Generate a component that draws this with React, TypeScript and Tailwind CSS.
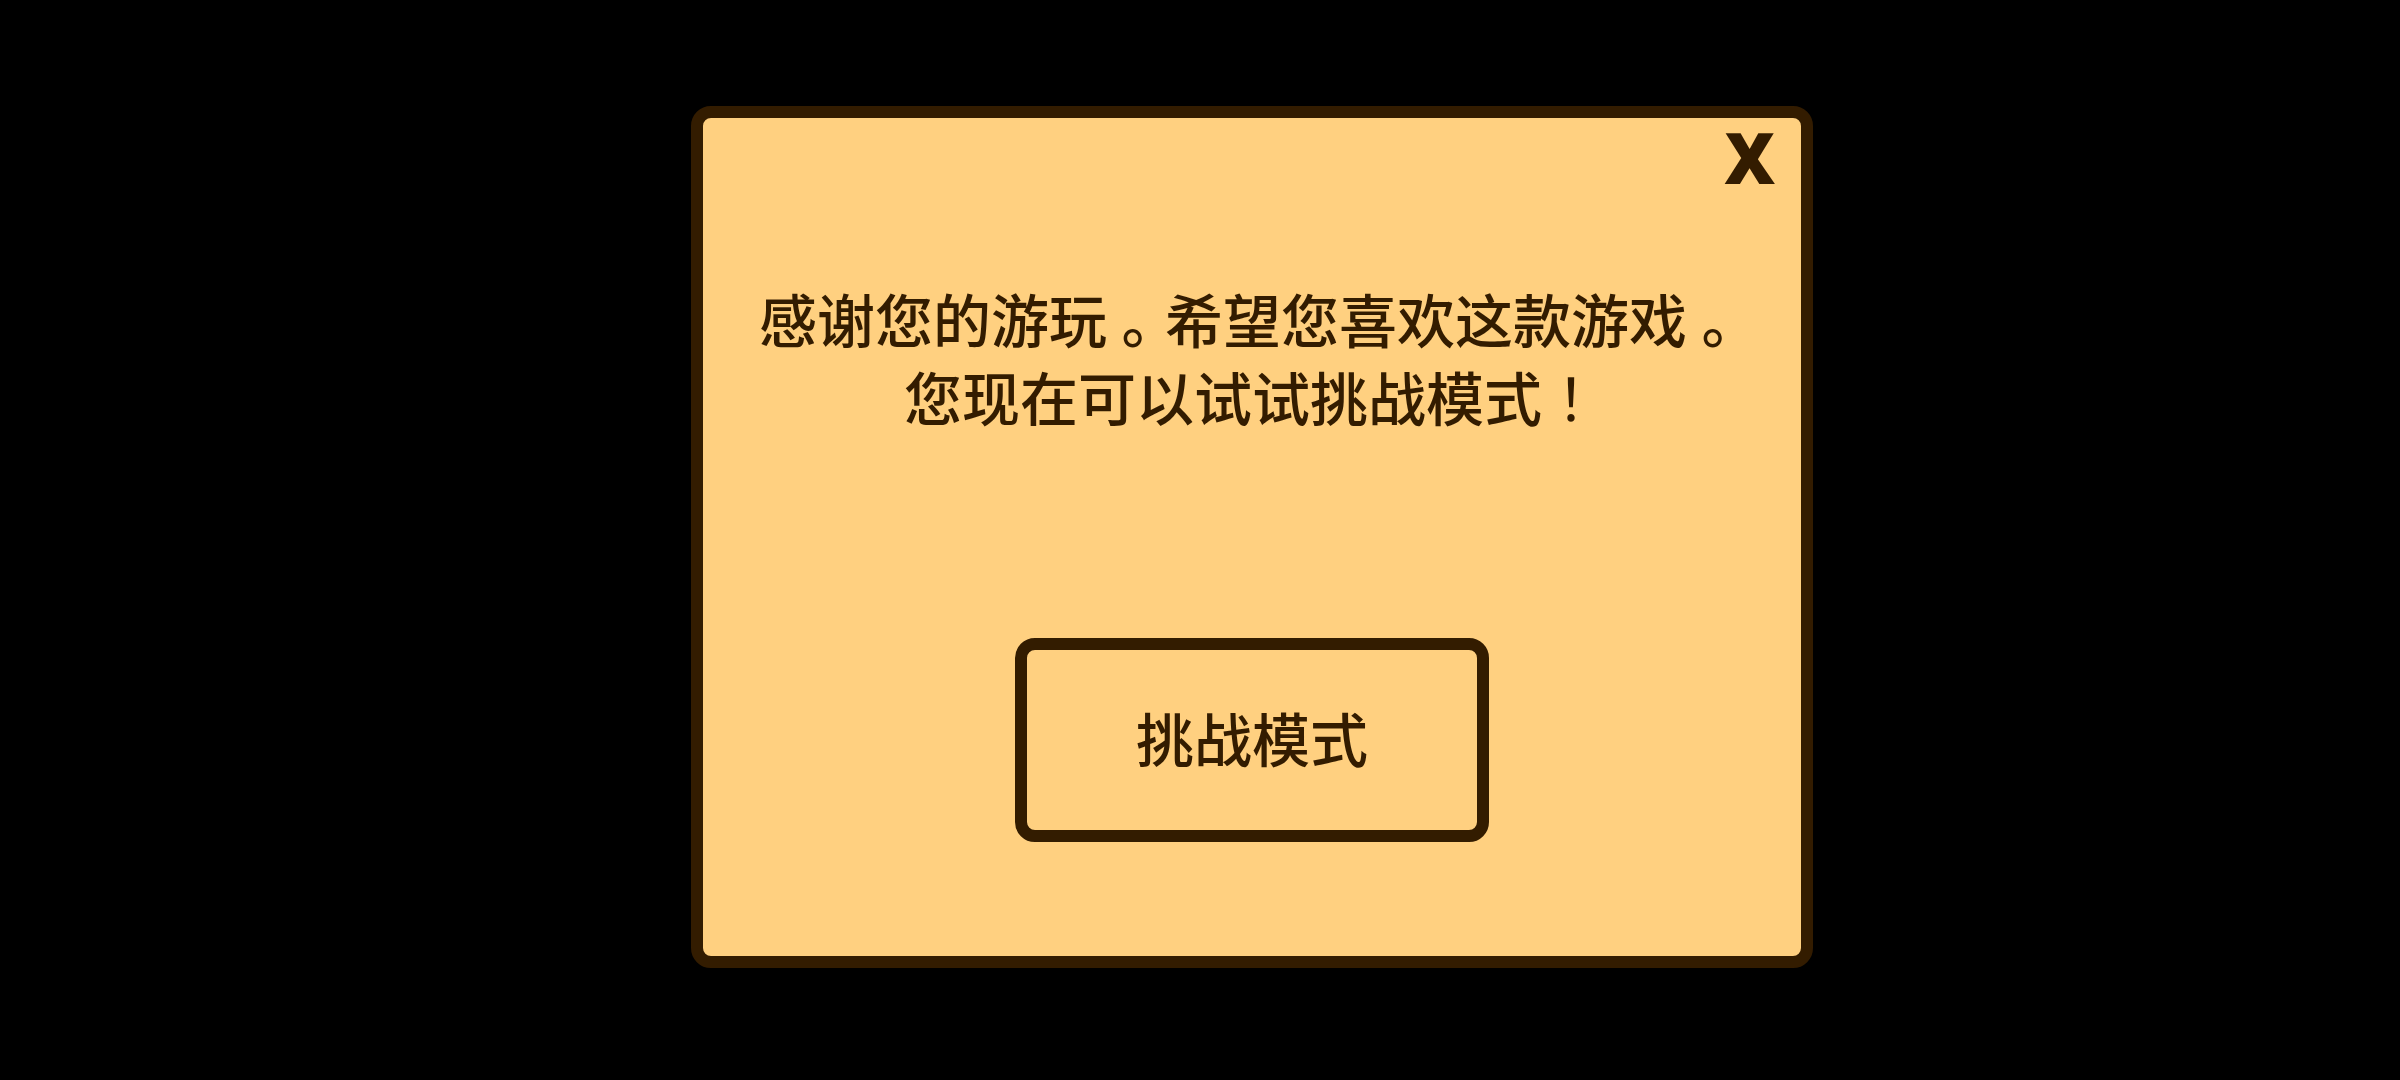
import React from 'react';

const Stop: React.FC = () => (
    <span className="inline-block w-[58px] text-center [font-feature-settings:'halt']">。</span>
);

const App: React.FC = () => {
    return (
        <main className="min-h-screen bg-black flex items-center justify-center pl-[104px] pb-[6px] text-[#331c00] font-['Noto_Sans_CJK_SC',sans-serif]">
            <section
                role="dialog"
                aria-labelledby="message"
                className="w-full max-w-[1122px] bg-[#ffd080] border-12 border-[#331c00] rounded-[20px] flex flex-col items-center pt-1 pb-[114px]"
            >
                <button
                    type="button"
                    className="self-end mr-[26px] text-[70px] leading-none font-extrabold font-['Open_Sans',sans-serif] cursor-pointer"
                >
                    X
                </button>
                <p id="message" className="mt-[87px] text-[58px] leading-[78px] font-medium text-center">
                    感谢您的游玩<Stop />希望您喜欢这款游戏<Stop />
                    <br />
                    您现在可以试试挑战模式
                    <span className="font-normal font-['Noto_Sans_CJK_TC',sans-serif]">！</span>
                </p>
                <button
                    type="button"
                    className="mt-[203px] px-[109px] pt-[48px] pb-[54px] border-12 border-[#331c00] rounded-[20px] text-[58px] leading-[78px] font-medium cursor-pointer"
                >
                    挑战模式
                </button>
            </section>
        </main>
    );
};

export default App;
